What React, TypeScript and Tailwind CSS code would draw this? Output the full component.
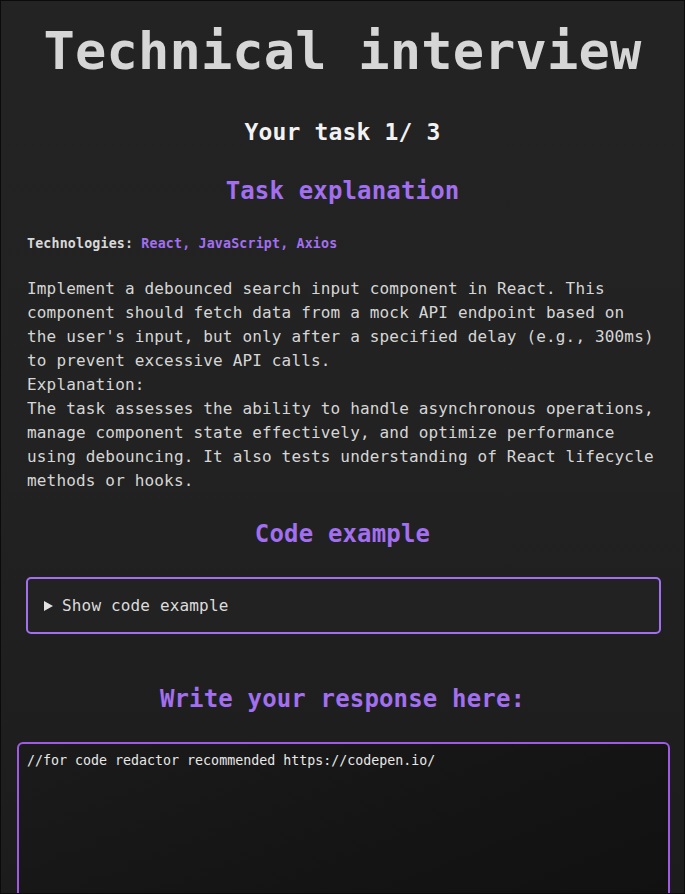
import { useState } from 'react';

const mono = 'font-["DejaVu_Sans_Mono","Liberation_Mono",monospace]';

export default function App() {
    const [response, setResponse] = useState('//for code redactor recommended https://codepen.io/');

    return (
        <div className={`h-[894px] overflow-hidden border border-[#0b0b0b] bg-gradient-to-b from-[#232323] via-[#222222] to-[#1c1c1c] ${mono} tracking-[0.01em]`}>
            {/* Header */}
            <h1 className="pt-[18px] text-center text-[52px] font-bold leading-[64px] text-[#d6d6d6]">
                Technical interview
            </h1>
            <h2 className="mt-[34px] text-center text-[23px] font-bold leading-[30px] text-[#f2f2f2]">
                Your task 1/ 3
            </h2>

            {/* Task explanation */}
            <h3 className="mt-[29px] text-center text-[24px] font-bold leading-[30px] text-[#a26ff0]">
                Task explanation
            </h3>
            <p className="mt-[28px] px-[26px] text-[13.3px] font-bold leading-[20px] text-[#d8d8d8]">
                Technologies: <span className="text-[#a26ff0]">React, JavaScript, Axios</span>
            </p>
            <div className="mt-[23px] px-[26px] text-[16px] leading-[24px] text-[#d6d6d6]">
                <p>
                    Implement a debounced search input component in React. This component should fetch data from a mock API endpoint based on the user's input, but only after a specified delay (e.g., 300ms) to prevent excessive API calls.
                </p>
                <p>Explanation:</p>
                <p>
                    The task assesses the ability to handle asynchronous operations, manage component state effectively, and optimize performance using debouncing. It also tests understanding of React lifecycle methods or hooks.
                </p>
            </div>

            {/* Code example */}
            <h3 className="mt-[26px] text-center text-[24px] font-bold leading-[30px] text-[#a26ff0]">
                Code example
            </h3>
            <details className="ml-[25px] mr-[23px] mt-[28px] rounded-[5px] border-2 border-[#a26ff0] bg-[#222222]">
                <summary className="flex h-[53px] cursor-pointer list-none items-center gap-[9px] pl-[16px] pr-[15px] text-[16px] text-[#dcdcdc] [&::-webkit-details-marker]:hidden">
                    <span className="h-0 w-0 border-y-[5px] border-l-[9px] border-y-transparent border-l-[#e2e2e2]" />
                    <span>Show code example</span>
                </summary>
            </details>

            {/* Response */}
            <h3 className="mt-[50px] text-center text-[24px] font-bold leading-[30px] text-[#a26ff0]">
                Write your response here:
            </h3>
            <div className="ml-[16px] mr-[14px] mt-[28px]">
                <textarea
                    value={response}
                    onChange={(e) => setResponse(e.target.value)}
                    className={`block h-[260px] w-full resize-none rounded-[6px] border-2 border-[#a05ae6] bg-gradient-to-br from-[#1b1b1b] via-[#141414] to-[#0f0f0f] px-[8px] py-[8px] text-[13.3px] leading-[18px] tracking-normal text-[#e8e8e8] outline-none ${mono}`}
                />
            </div>
        </div>
    );
}
